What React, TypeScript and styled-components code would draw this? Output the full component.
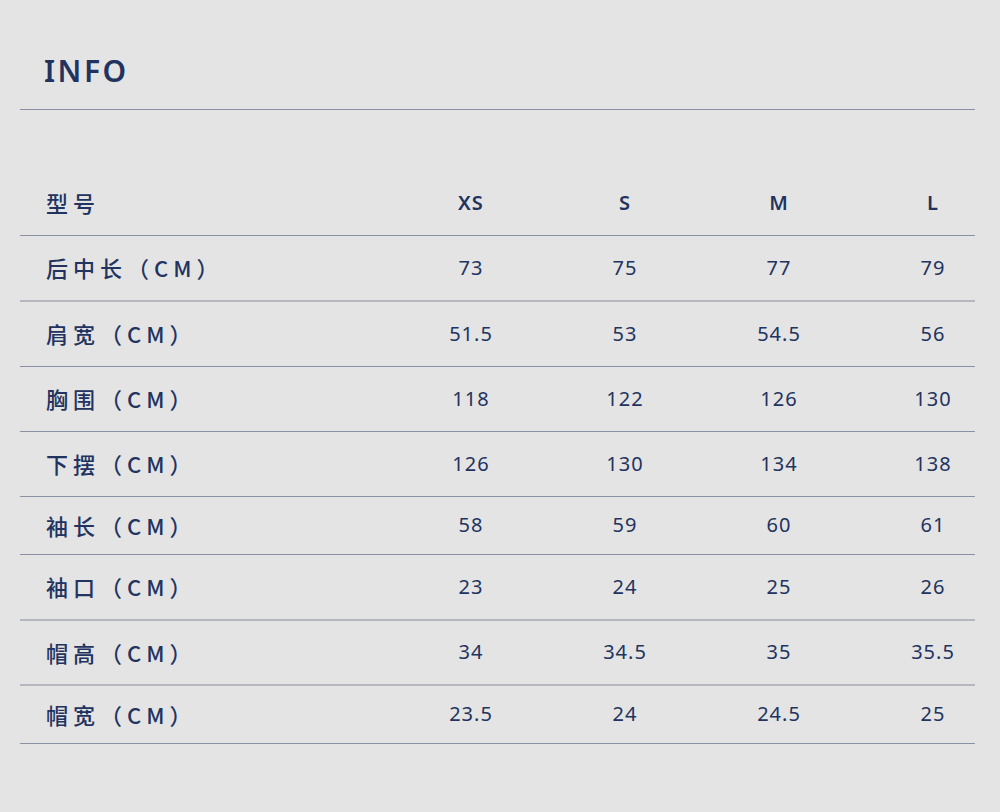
import React from "react";
import styled, { createGlobalStyle } from "styled-components";

const Global = createGlobalStyle`
  html, body { margin: 0; padding: 0; background: #e4e4e4; }
  body { font-family: "Noto Sans", "Noto Sans CJK SC", sans-serif; color: #22335f; }
`;

const Page = styled.div`
  width: 955px;
  padding: 0 25px 0 20px;
  min-height: 812px;
  background: #e4e4e4;
`;

const TitleBar = styled.div`
  padding: 52px 0 20px 24px;
  border-bottom: 1px solid #8a90a6;
`;

const Title = styled.h1`
  margin: 0;
  font-family: "Noto Sans", sans-serif;
  font-size: 30px;
  line-height: 37px;
  font-weight: 600;
  letter-spacing: 2.5px;
  color: #22335f;
`;

const Table = styled.div`
  margin-top: 61px;
  display: flex;
  flex-direction: column;
`;

const Row = styled.div<{ $h: number; $light?: boolean }>`
  display: grid;
  grid-template-columns: 374px repeat(4, 154px);
  align-items: center;
  height: ${(p) => p.$h}px;
  padding-bottom: 2px;
  border-bottom: ${(p) => (p.$light ? "2px solid #b4b7c0" : "1px solid #8a90a6")};
  box-sizing: border-box;
`;

const Label = styled.div`
  padding-left: 26px;
  font-family: "Noto Sans CJK SC", sans-serif;
  font-size: 22px;
  font-weight: 500;
  letter-spacing: 5px;
  white-space: nowrap;
`;

const Cell = styled.div<{ $head?: boolean }>`
  text-align: center;
  font-family: "Noto Sans", sans-serif;
  font-size: 20px;
  font-weight: ${(p) => (p.$head ? 600 : 400)};
  letter-spacing: 1px;
  white-space: nowrap;
`;

const rows: { label: string; values: string[]; h: number; light?: boolean }[] = [
  { label: "后中长（CM）", values: ["73", "75", "77", "79"], h: 66, light: true },
  { label: "肩宽（CM）", values: ["51.5", "53", "54.5", "56"], h: 65 },
  { label: "胸围（CM）", values: ["118", "122", "126", "130"], h: 65 },
  { label: "下摆（CM）", values: ["126", "130", "134", "138"], h: 65 },
  { label: "袖长（CM）", values: ["58", "59", "60", "61"], h: 58 },
  { label: "袖口（CM）", values: ["23", "24", "25", "26"], h: 66, light: true },
  { label: "帽高（CM）", values: ["34", "34.5", "35", "35.5"], h: 65, light: true },
  { label: "帽宽（CM）", values: ["23.5", "24", "24.5", "25"], h: 58 },
];

export default function App() {
  return (
    <Page>
      <Global />
      <TitleBar>
        <Title>INFO</Title>
      </TitleBar>
      <Table>
        <Row $h={65}>
          <Label>型号</Label>
          {["XS", "S", "M", "L"].map((s) => (
            <Cell key={s} $head>
              {s}
            </Cell>
          ))}
        </Row>
        {rows.map((r) => (
          <Row key={r.label} $h={r.h} $light={r.light}>
            <Label>{r.label}</Label>
            {r.values.map((v, i) => (
              <Cell key={i}>{v}</Cell>
            ))}
          </Row>
        ))}
      </Table>
    </Page>
  );
}
